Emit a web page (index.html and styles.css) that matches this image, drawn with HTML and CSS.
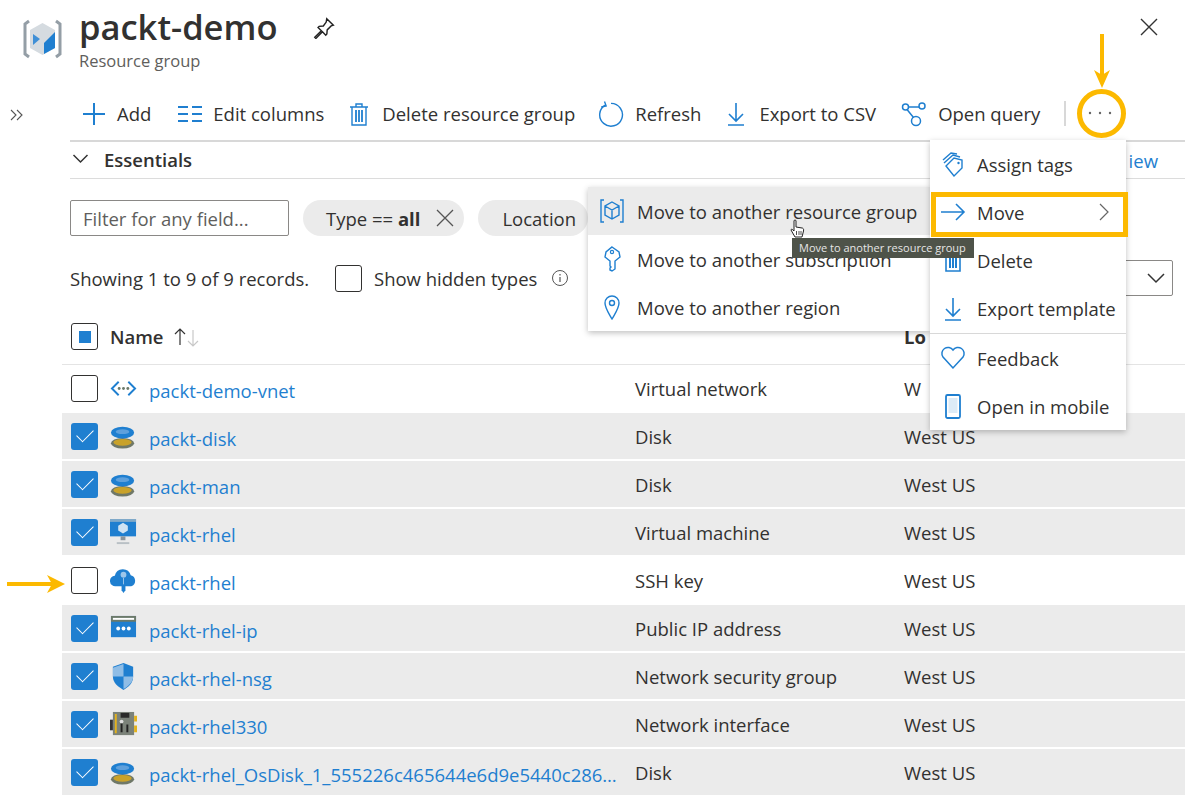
FILE: index.html
```html
<!DOCTYPE html>
<html lang="en">
<head>
  <meta charset="UTF-8" />
  <title>packt-demo - Resource group</title>
  <link rel="stylesheet" href="styles.css">
</head>
<body>
  <svg class="expand" viewBox="0 0 14 12" width="14" height="12"><path d="M1 1l5 5-5 5M7 1l5 5-5 5" fill="none" stroke="#555" stroke-width="1.100"/></svg>

  <header class="title-bar">
    <svg class="group-icon" viewBox="0 0 44 44" width="44" height="44">
      <path d="M9 4L5 7v30l4 3M36 4l4 3v30l-4 3" fill="none" stroke="#949ea6" stroke-width="3"/>
      <path d="M22.500 6L35 13v18l-12.500 7L10 31V13z" fill="#d5dbe0"/>
      <path d="M24 26l11-11v16l-11 6z" fill="#1f7fd0"/>
      <path d="M13 17l7 5-7 6z" fill="#3f8fd6"/>
    </svg>
    <div class="title-text">
      <h1>packt-demo</h1>
      <p>Resource group</p>
    </div>
    <svg class="pin" viewBox="0 0 20 20" width="22" height="22">
      <path d="M12.500 1.500l6 6-2 .6-3.600 3.600-.3 3.800-1 1-3-3-6 6-1-1 6-6-3-3 1-1 3.800-.3L12 4.600z" fill="none" stroke="#222" stroke-width="1.300"/>
    </svg>
    <svg class="close" viewBox="0 0 20 20" width="20" height="20">
      <path d="M2 2l16 16M18 2L2 18" stroke="#333" stroke-width="1.400"/>
    </svg>
  </header>

  <div class="command-bar">
    <button class="cmd cmd-add">
      <svg viewBox="0 0 24 24" width="24" height="24"><path d="M12 1v22M1 12h22" stroke="#1f7fd0" stroke-width="2"/></svg>
      Add
    </button>
    <button class="cmd">
      <svg viewBox="0 0 24 24" width="24" height="24"><path d="M0 5h10M14 5h10M0 12h10M14 12h10M0 19h10M14 19h10" stroke="#1f7fd0" stroke-width="2"/></svg>
      Edit columns
    </button>
    <button class="cmd">
      <svg viewBox="0 0 24 24" width="24" height="24"><path d="M5 5h14v18H5zM3 5h18M9 5V2h6v3" fill="none" stroke="#1f7fd0" stroke-width="1.400"/><path d="M9 8v12M12 8v12M15 8v12" stroke="#1f7fd0" stroke-width="1.800"/></svg>
      Delete resource group
    </button>
    <button class="cmd">
      <svg viewBox="0 0 24 24" width="26" height="26"><path d="M7 3.500a10.500 10.500 0 1 0 5-1.300" fill="none" stroke="#1f7fd0" stroke-width="1.300"/><path d="M6 .5l1.500 4L3 5.500" fill="none" stroke="#1f7fd0" stroke-width="1.300"/></svg>
      Refresh
    </button>
    <button class="cmd cmd-export">
      <svg viewBox="0 0 24 24" width="24" height="24"><path d="M12 1v17M5 12l7 7 7-7M4 23h16" fill="none" stroke="#1f7fd0" stroke-width="1.600"/></svg>
      Export to CSV
    </button>
    <button class="cmd">
      <svg viewBox="0 0 26 26" width="26" height="26"><g fill="none" stroke="#1f7fd0" stroke-width="1.500"><circle cx="4.500" cy="6" r="3"/><circle cx="21" cy="5" r="3"/><circle cx="15" cy="20" r="4.500"/><path d="M7.500 6H18M6 8.500l6.500 8"/></g></svg>
      Open query
    </button>
    <span class="cmd-sep"></span>
    <button class="more">
      <svg viewBox="0 0 26 4" width="26" height="4"><circle cx="3" cy="2" r="1.200" fill="#666"/><circle cx="13" cy="2" r="1.200" fill="#666"/><circle cx="23" cy="2" r="1.200" fill="#666"/></svg>
    </button>
  </div>

  <div class="essentials">
    <svg viewBox="0 0 16 10" width="17" height="10"><path d="M1 1l7 7 7-7" fill="none" stroke="#333" stroke-width="1.500"/></svg>
    <strong>Essentials</strong>
    <a class="json-view" href="#">iew</a>
  </div>

  <div class="filters">
    <input class="filter-input" type="text" placeholder="Filter for any field...">
    <span class="pill"><span>Type == <b>all</b></span>
      <svg viewBox="0 0 20 20" width="20" height="20"><path d="M2 2l16 16M18 2L2 18" stroke="#555" stroke-width="1.300"/></svg>
    </span>
    <span class="pill pill-cut">Location</span>
  </div>

  <div class="records">
    <span class="count">Showing 1 to 9 of 9 records.</span>
    <span class="box"></span>
    <span class="hidden-types">Show hidden types</span>
    <svg viewBox="0 0 18 18" width="18" height="18"><circle cx="9" cy="9" r="7.500" fill="none" stroke="#555"/><path d="M9 8v5M9 5v1.500" stroke="#555" stroke-width="1.200"/></svg>
    <span class="dropdown">
      <svg viewBox="0 0 20 12" width="20" height="12"><path d="M2 2l8 8 8-8" fill="none" stroke="#333" stroke-width="1.500"/></svg>
    </span>
  </div>

  <section class="grid">
    <div class="row head">
      <span class="box box-mixed"></span>
      <span class="name-head">Name
        <svg viewBox="0 0 28 20" width="28" height="20"><path d="M7 18V2M2 7l5-5 5 5" fill="none" stroke="#333" stroke-width="1.200"/><path d="M20 3v16M15 14l5 5 5-5" fill="none" stroke="#c8c8c8" stroke-width="1.200"/></svg>
      </span>
      <span class="type"></span>
      <strong class="loc">Lo</strong>
    </div>

    <div class="row">
      <span class="box"></span>
      <svg class="res" viewBox="0 0 28 28"><path d="M9 7l-7 7 7 7M19 7l7 7-7 7" fill="none" stroke="#1f7fd0" stroke-width="2"/><circle cx="9.500" cy="14" r="1.500" fill="#6b7a6b"/><circle cx="14" cy="14" r="1.500" fill="#6b7a6b"/><circle cx="18.500" cy="14" r="1.500" fill="#6b7a6b"/></svg>
      <a class="name" href="#">packt-demo-vnet</a>
      <span class="type">Virtual network</span>
      <span class="loc">W</span>
    </div>

    <div class="row sel">
      <span class="box box-on"></span>
      <svg class="res" viewBox="0 0 28 28"><use href="#disk"/></svg>
      <a class="name" href="#">packt-disk</a>
      <span class="type">Disk</span>
      <span class="loc">West US</span>
    </div>

    <div class="row sel">
      <span class="box box-on"></span>
      <svg class="res" viewBox="0 0 28 28"><use href="#disk"/></svg>
      <a class="name" href="#">packt-man</a>
      <span class="type">Disk</span>
      <span class="loc">West US</span>
    </div>

    <div class="row sel">
      <span class="box box-on"></span>
      <svg class="res" viewBox="0 0 28 28"><path d="M0 0h27v18H0z" fill="#1f7fd0"/><path d="M0 0h27v3H0z" fill="#7fa9c9"/><path d="M13.500 4l5 3v5l-5 3-5-3V7z" fill="#cfe3f3"/><path d="M11 18h5v4h-5z" fill="#8a949b"/><path d="M7 24h13v2H7z" fill="#b9c0c5"/></svg>
      <a class="name" href="#">packt-rhel</a>
      <span class="type">Virtual machine</span>
      <span class="loc">West US</span>
    </div>

    <div class="row">
      <span class="box"></span>
      <svg class="res" viewBox="0 0 28 28"><path d="M6 20a5.500 5.500 0 0 1-1-11 8.500 8.500 0 0 1 16.500-.5A6 6 0 0 1 22 20z" fill="#1f7fd0"/><path d="M12 19h4v5l-2 3-2-3z" fill="#1f7fd0"/><circle cx="14" cy="8" r="3" fill="#9cc6ea"/><path d="M14 11v7" stroke="#9cc6ea"/></svg>
      <a class="name" href="#">packt-rhel</a>
      <span class="type">SSH key</span>
      <span class="loc">West US</span>
    </div>

    <div class="row sel">
      <span class="box box-on"></span>
      <svg class="res" viewBox="0 0 28 28"><path d="M1 1h26v22H1z" fill="#1f7fd0"/><path d="M1 1h26v6H1z" fill="#6b7a6b"/><path d="M3 3h22v2H3z" fill="#fff"/><circle cx="8.500" cy="14" r="2" fill="#fff"/><circle cx="14" cy="14" r="2" fill="#fff"/><circle cx="19.500" cy="14" r="2" fill="#fff"/></svg>
      <a class="name" href="#">packt-rhel-ip</a>
      <span class="type">Public IP address</span>
      <span class="loc">West US</span>
    </div>

    <div class="row sel">
      <span class="box box-on"></span>
      <svg class="res" viewBox="0 0 28 28"><path d="M14 0l10 4v10c0 7-5 11-10 14C9 25 3 21 3 14V4z" fill="#1f7fd0"/><path d="M14 1v13H3V5z" fill="#8fbde6"/><path d="M14 14h10c0 6-5 10-10 13z" fill="#8fbde6"/></svg>
      <a class="name" href="#">packt-rhel-nsg</a>
      <span class="type">Network security group</span>
      <span class="loc">West US</span>
    </div>

    <div class="row sel">
      <span class="box box-on"></span>
      <svg class="res" viewBox="0 0 28 28"><path d="M3 1h22v24H3z" fill="#7b8279"/><path d="M0 9h3v11H0z" fill="#333"/><path d="M11 2h9v5h-9z" fill="#2a2a2a"/><path d="M5 3h2v20H5zM25 5h3v6h-3zM25 15h3v7h-3z" fill="#e3b21c"/><circle cx="12" cy="11" r="2" fill="#ddd"/><path d="M11 13h2v9h-2zM17 14h2v8h-2z" fill="#222"/></svg>
      <a class="name" href="#">packt-rhel330</a>
      <span class="type">Network interface</span>
      <span class="loc">West US</span>
    </div>

    <div class="row sel">
      <span class="box box-on"></span>
      <svg class="res" viewBox="0 0 28 28"><use href="#disk"/></svg>
      <a class="name" href="#">packt-rhel_OsDisk_1_555226c465644e6d9e5440c286…</a>
      <span class="type">Disk</span>
      <span class="loc">West US</span>
    </div>
  </section>

  <!-- shared disk icon -->
  <svg class="defs" width="0" height="0">
    <symbol id="disk" viewBox="0 0 28 28">
      <ellipse cx="13" cy="21" rx="12" ry="5.500" fill="#6f7868"/>
      <ellipse cx="13" cy="20" rx="9.500" ry="3.500" fill="#c9a22a"/>
      <ellipse cx="13" cy="10" rx="12" ry="6" fill="#1f7fd0"/>
      <ellipse cx="13" cy="9" rx="7" ry="2.500" fill="#5ea0dc"/>
    </symbol>
  </svg>

  <!-- menus that lie over the page -->
  <ul class="menu submenu">
    <li class="hot">
      <svg viewBox="0 0 26 26" width="26" height="26"><g fill="none" stroke="#1f7fd0" stroke-width="1.400"><path d="M5 2H2v22h3M21 2h3v22h-3"/><path d="M13 4l7 4v9l-7 4-7-4V8zM6 8l7 4 7-4M13 12v9"/></g></svg>
      Move to another resource group
    </li>
    <li>
      <svg viewBox="0 0 26 26" width="26" height="26"><path d="M13 1l7 5 1 5-5 4v8l-3 2-2-1v-2l1-1-1-1v-5l-5-4 1-5z" fill="none" stroke="#1f7fd0" stroke-width="1.400"/><circle cx="13" cy="6" r="1.600" fill="none" stroke="#1f7fd0" stroke-width="1.200"/></svg>
      Move to another subscription
    </li>
    <li>
      <svg viewBox="0 0 26 26" width="26" height="26"><path d="M13 25C9 18 6 14 6 9a7 7 0 0 1 14 0c0 5-3 9-7 16z" fill="none" stroke="#1f7fd0" stroke-width="1.400"/><circle cx="13" cy="9" r="2.500" fill="none" stroke="#1f7fd0" stroke-width="1.400"/></svg>
      Move to another region
    </li>
  </ul>

  <ul class="menu mainmenu">
    <li>
      <svg viewBox="0 0 26 26" width="26" height="26"><g fill="none" stroke="#1f7fd0" stroke-width="1.400"><path d="M6 15l8-8 8 2v8l-8 8z"/><path d="M4 12l9-8 7 2M3 9l8-7 6 1"/></g><circle cx="18.500" cy="12" r="1.200" fill="#1f7fd0"/></svg>
      Assign tags
    </li>
    <li class="move-item">
      <svg viewBox="0 0 26 26" width="26" height="26"><path d="M1 13h23M16 5l8 8-8 8" fill="none" stroke="#1f7fd0" stroke-width="1.600"/></svg>
      Move
      <svg class="chev" viewBox="0 0 10 18" width="10" height="18"><path d="M1 1l8 8-8 8" fill="none" stroke="#666" stroke-width="1.200"/></svg>
    </li>
    <li>
      <svg viewBox="0 0 26 26" width="26" height="26"><path d="M6 6h14v18H6zM4 6h18" fill="none" stroke="#1f7fd0" stroke-width="1.600"/><path d="M10 9v12M13 9v12M16 9v12" stroke="#1f7fd0" stroke-width="2"/></svg>
      Delete
    </li>
    <li class="rule">
      <svg viewBox="0 0 26 26" width="26" height="26"><path d="M13 2v17M6 13l7 7 7-7M5 24h16" fill="none" stroke="#1f7fd0" stroke-width="1.600"/></svg>
      Export template
    </li>
    <li>
      <svg viewBox="0 0 26 26" width="26" height="26"><path d="M13 23L3 12a6 6 0 0 1 10-7 6 6 0 0 1 10 7z" fill="none" stroke="#1f7fd0" stroke-width="1.500"/></svg>
      Feedback
    </li>
    <li>
      <svg viewBox="0 0 26 26" width="26" height="26"><rect x="6" y="2" width="14" height="23" rx="1.500" fill="none" stroke="#1f7fd0" stroke-width="1.800"/><path d="M8.500 5h9v15h-9z" fill="#dcebf7"/></svg>
      Open in mobile
    </li>
  </ul>

  <div class="tooltip">Move to another resource group</div>

  <svg class="cursor" viewBox="0 0 16 20" width="16" height="20"><path d="M5 2a1 1 0 0 1 2 0v6l6 1c1 0 2 1 1.500 3L13 18H6L2 11c0-1 1-1 2 0l1 1z" fill="#fff" stroke="#222"/><path d="M7.500 12v4M10 12v4M12 12v4" stroke="#222" stroke-width=".8"/></svg>

  <!-- yellow callouts -->
  <span class="ring"></span>
  <span class="move-box"></span>
  <svg class="arrow-down" viewBox="0 0 20 54" width="20" height="54"><path d="M10 0v42" stroke="#fcb900" stroke-width="4"/><path d="M2 36l8 5 8-5-8 18z" fill="#fcb900"/></svg>
  <svg class="arrow-right" viewBox="0 0 58 20" width="58" height="20"><path d="M0 10h46" stroke="#fcb900" stroke-width="4"/><path d="M40 1l18 9-18 9 5-9z" fill="#fcb900"/></svg>
</body>
</html>
```

FILE: styles.css
```css
* {
  box-sizing: border-box;
}

body {
  margin: 0;
  width: 1185px;
  height: 801px;
  overflow: hidden;
  position: relative;
  font-family: 'Open Sans', sans-serif;
  font-size: 18.500px;
  color: #323130;
  background-color: #fff;
}

a {
  color: #1f7fd0;
  text-decoration: none;
}

.expand {
  position: absolute;
  left: 10px;
  top: 109px;
}

.title-bar {
  display: flex;
  align-items: flex-start;
  height: 91px;
  padding: 5px 26px 0 20px;
}

.group-icon {
  margin-top: 12px;
  margin-right: 15px;
}

.title-text h1 {
  margin: 0;
  font-size: 34.500px;
  font-weight: 600;
  line-height: 44px;
  color: #323130;
}

.title-text p {
  margin: 1px 0 0;
  font-size: 16.500px;
  line-height: 22px;
  color: #605e5c;
}

.pin {
  margin: 12px 0 0 36px;
}

.close {
  margin: 12px 0 0 auto;
}

.command-bar {
  display: flex;
  align-items: center;
  height: 51px;
  margin-left: 70px;
  padding-left: 12px;
  padding-bottom: 4px;
  border-bottom: 2px solid #d8d8d8;
  gap: 23px;
}

.cmd {
  display: flex;
  align-items: center;
  gap: 11px;
  padding: 0;
  border: none;
  background: none;
  font: inherit;
  color: #323130;
  white-space: nowrap;
}

.cmd-add {
  margin-right: 4px;
}

.cmd-export {
  margin-right: 2px;
}

.cmd-sep {
  width: 2px;
  height: 25px;
  margin-left: 1px;
  background-color: #d8d8d8;
}

.more {
  display: flex;
  margin: 0 0 2px -2px;
  padding: 0;
  border: none;
  background: none;
}

.essentials {
  display: flex;
  align-items: center;
  gap: 15px;
  height: 37px;
  margin-left: 70px;
  padding: 0 27px 2px 2px;
  border-bottom: 1px solid #dcdcdc;
}

.essentials strong {
  font-weight: 600;
}

.json-view {
  margin: 2px 0 0 auto;
}

.filters {
  display: flex;
  align-items: center;
  gap: 14px;
  height: 36px;
  margin: 21px 0 0 70px;
}

.filter-input {
  width: 219px;
  height: 36px;
  padding: 0 12px;
  border: 1px solid #8a8886;
  border-radius: 2px;
  font: inherit;
}

.filter-input::placeholder {
  color: #605e5c;
}

.pill {
  display: flex;
  align-items: center;
  gap: 15px;
  height: 36px;
  padding: 0 9px 0 23px;
  border-radius: 18px;
  background-color: #ebebeb;
  white-space: nowrap;
}

.pill b {
  font-weight: 700;
}

.pill-cut {
  width: 110px;
  padding-left: 24px;
}

.records {
  display: flex;
  align-items: center;
  height: 28px;
  margin: 28px 0 0 70px;
}

.count {
  width: 265px;
}

.box {
  flex: none;
  display: block;
  width: 27px;
  height: 27px;
  border: 1px solid #323130;
  border-radius: 3px;
  background-color: #fff;
}

.hidden-types {
  margin: 0 14px 0 12px;
}

.dropdown {
  display: flex;
  align-items: center;
  justify-content: flex-end;
  width: 118px;
  height: 36px;
  margin: 0 12px 0 auto;
  padding-right: 6px;
  border: 1px solid #8a8886;
  border-radius: 2px;
}

.grid {
  margin: 24px 0 0 62px;
}

.row {
  display: flex;
  align-items: center;
  height: 48px;
  padding-left: 9px;
  border-bottom: 2px solid #fff;
}

.row .type {
  flex: none;
  order: 3;
  width: 269px;
}

.row .loc {
  order: 4;
}

.head {
  height: 49px;
  padding-bottom: 7px;
  border-bottom: 1px solid #e4e4e4;
}

.name-head {
  display: flex;
  align-items: center;
  gap: 9px;
  width: 525px;
  margin-left: 12px;
  font-weight: 600;
}

.res {
  flex: none;
  width: 27px;
  height: 27px;
  margin-left: 12px;
}

.name {
  flex: none;
  width: 486px;
  margin: 5px 0 0 12px;
  white-space: nowrap;
}

.sel {
  background-color: #ebebeb;
}

.box-on {
  position: relative;
  border: none;
  background-color: #1f7fd0;
}

.box-on::after {
  content: "";
  position: absolute;
  left: 6px;
  top: 6px;
  width: 15px;
  height: 8px;
  border-left: 1.500px solid #fff;
  border-bottom: 1.500px solid #fff;
  transform: rotate(-45deg);
}

.box-mixed {
  position: relative;
}

.box-mixed::after {
  content: "";
  position: absolute;
  left: 7px;
  top: 7px;
  width: 12px;
  height: 12px;
  background-color: #1f7fd0;
}

.defs {
  position: absolute;
}

.menu {
  position: absolute;
  margin: 0;
  padding: 0;
  list-style: none;
  background-color: #fff;
  box-shadow: 0 2px 6px rgba(0, 0, 0, 0.25);
}

.menu li {
  display: flex;
  align-items: center;
  height: 48px;
  white-space: nowrap;
}

.mainmenu {
  left: 930px;
  top: 140px;
  width: 196px;
}

.mainmenu li {
  gap: 11px;
  padding-left: 10px;
}

.mainmenu li.rule {
  height: 50px;
  border-bottom: 1px solid #d8d8d8;
}

.chev {
  margin-left: auto;
  margin-right: 17px;
}

.submenu {
  left: 588px;
  top: 187px;
  width: 342px;
}

.submenu li {
  gap: 12px;
  padding-left: 11px;
}

.submenu .hot {
  background-color: #ebebeb;
}

.tooltip {
  position: absolute;
  left: 792px;
  top: 238px;
  width: 182px;
  height: 20px;
  padding-left: 7px;
  background-color: #4e5349;
  color: #e6e6e6;
  font-size: 11px;
  line-height: 20px;
  white-space: nowrap;
}

.cursor {
  position: absolute;
  left: 789px;
  top: 219px;
}

.ring {
  position: absolute;
  left: 1077px;
  top: 89px;
  width: 49px;
  height: 49px;
  border: 5px solid #fcb900;
  border-radius: 50%;
}

.move-box {
  position: absolute;
  left: 931px;
  top: 192px;
  width: 197px;
  height: 45px;
  border: 5px solid #fcb900;
}

.arrow-down {
  position: absolute;
  left: 1092px;
  top: 34px;
}

.arrow-right {
  position: absolute;
  left: 7px;
  top: 574px;
}
```
